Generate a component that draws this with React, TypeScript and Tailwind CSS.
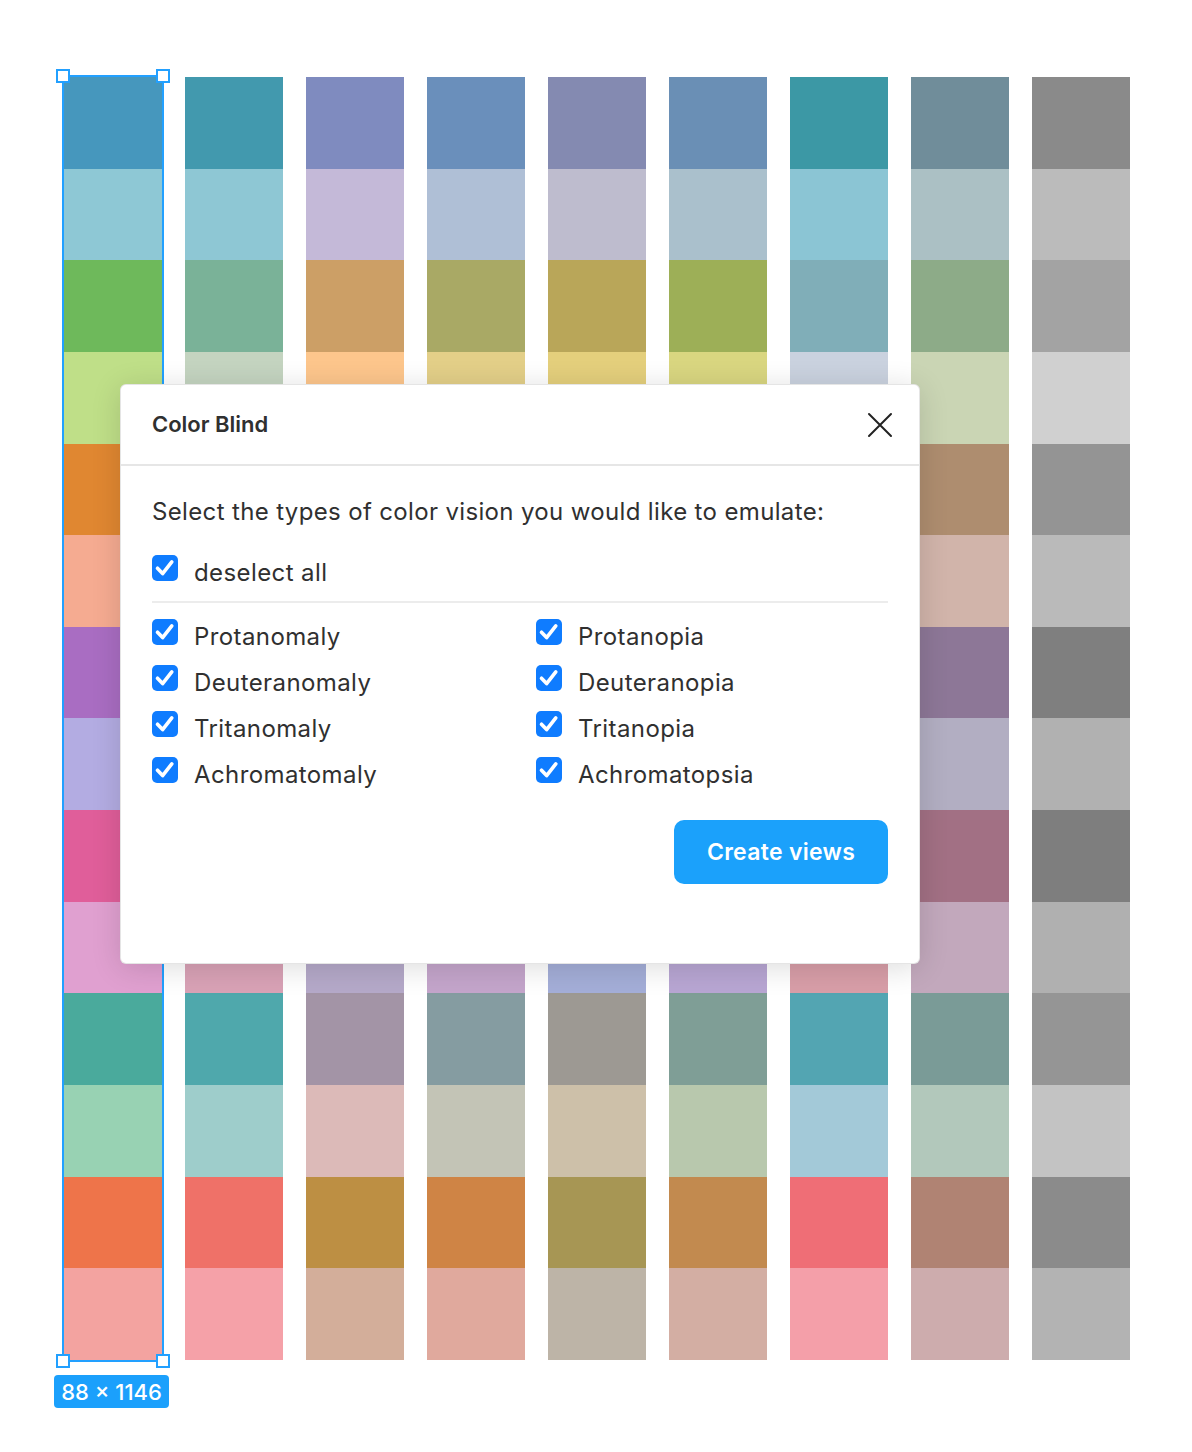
import React from "react";

// Palette columns: the original palette followed by its simulated variants.
const columns: string[][] = [
  ["#4697bd", "#8ec8d5", "#6eb95b", "#bfdf88", "#e08731", "#f5ab91", "#a96dc2", "#b3ace2", "#e05e9a", "#e0a0d0", "#4aaa9c", "#98d2b3", "#ee744a", "#f3a3a0"],
  ["#4299ae", "#8ec7d4", "#7ab298", "#c4d4c0", "#c0933e", "#e6b09a", "#8b86c4", "#b2b0e0", "#d3728f", "#d9a2b6", "#4fa8ac", "#9ecdcb", "#ef7168", "#f5a1a8"],
  ["#7f8bbf", "#c4b9d8", "#cc9f66", "#fdc68c", "#b9893c", "#e0b395", "#7d88c1", "#b3b4dd", "#a98a9f", "#b5a9c9", "#a394a6", "#dcbab8", "#bd8f43", "#d3ae9a"],
  ["#6a8fbb", "#afbfd6", "#a9a965", "#e3cf88", "#c98b3f", "#edb094", "#8784c2", "#b5b1de", "#c07a95", "#c4a5cb", "#859ca1", "#c3c4b6", "#cf8445", "#e0a99d"],
  ["#848ab1", "#bebcce", "#b9a659", "#e4cf7c", "#b89c4c", "#d8b9a0", "#8d8cb2", "#b9b7cc", "#a98f96", "#a4aed8", "#9d9993", "#cdc0a9", "#a79654", "#bdb4a7"],
  ["#6a8fb5", "#aac0cc", "#9daf57", "#d9d680", "#c3924a", "#e1b49d", "#8a86bc", "#b6b2d6", "#bb7f97", "#b8a6d3", "#7f9e96", "#b8c8ad", "#c28a4f", "#d3aea3"],
  ["#3c98a5", "#8bc5d4", "#80aeb8", "#cad2df", "#d18a72", "#e7aeb0", "#6b90c2", "#a9bbe0", "#d27089", "#d89ea8", "#53a5b2", "#a3c9d8", "#ef6e76", "#f49fa9"],
  ["#708d9a", "#abc0c4", "#8dab88", "#cad5b4", "#ae8d6f", "#d1b4aa", "#8d7797", "#b2aec2", "#a27084", "#c2a8bc", "#7a9b97", "#b2c8bb", "#b08373", "#cdacad"],
  ["#8a8a8a", "#bbbbbb", "#a3a3a3", "#d0d0d0", "#949494", "#bababa", "#7f7f7f", "#b1b1b1", "#7e7e7e", "#b0b0b0", "#959595", "#c3c3c3", "#8b8b8b", "#b3b3b3"],
];

const leftTypes = ["Protanomaly", "Deuteranomaly", "Tritanomaly", "Achromatomaly"];
const rightTypes = ["Protanopia", "Deuteranopia", "Tritanopia", "Achromatopsia"];

function Checkbox() {
  return (
    <span className="flex h-[26px] w-[26px] shrink-0 items-center justify-center rounded-[5px] bg-[#0f7cff]">
      <svg width="26" height="26" viewBox="0 0 26 26" fill="none">
        <path d="M5.5 13.2 L10.6 18.6 L19.8 6.8" stroke="#ffffff" strokeWidth="3.6" strokeLinecap="round" strokeLinejoin="round" />
      </svg>
    </span>
  );
}

function CheckRow({ label }: { label: string }) {
  return (
    <label className="flex h-[46px] items-start gap-4">
      <Checkbox />
      <span className="mt-[5px] text-[24px] leading-[26px] tracking-[0.4px] text-[#303030]">{label}</span>
    </label>
  );
}

function Handle({ pos }: { pos: string }) {
  return <span className={`absolute h-[14px] w-[14px] border-2 border-[#22a0ff] bg-white ${pos}`} />;
}

export default function App() {
  return (
    <div
      className="relative h-[1452px] w-[1192px] overflow-hidden bg-white"
      style={{ fontFamily: "Inter, 'Noto Sans', 'Liberation Sans', sans-serif" }}
    >
      {/* swatch board */}
      <div className="flex gap-[23px] pl-[64px] pt-[77px]">
        {columns.map((col, ci) => (
          <div key={ci} className="relative flex h-[1283px] w-[98px] flex-col">
            {col.map((c, ri) => (
              <div key={ri} className="flex-1" style={{ backgroundColor: c }} />
            ))}
            {ci === 0 && (
              <>
                <div className="pointer-events-none absolute -inset-[2px] border-2 border-[#22a0ff]" />
                <Handle pos="-left-[8px] -top-[8px]" />
                <Handle pos="-right-[8px] -top-[8px]" />
                <Handle pos="-left-[8px] -bottom-[8px]" />
                <Handle pos="-right-[8px] -bottom-[8px]" />
                <div className="absolute -left-[10px] top-[calc(100%+15px)] flex h-[33px] w-[115px] items-center justify-center rounded-[4px] bg-[#1ba0fc] text-[22px] font-medium leading-none text-white">
                  88 × 1146
                </div>
              </>
            )}
          </div>
        ))}
      </div>

      {/* Color Blind dialog */}
      <div className="absolute left-[120px] top-[384px] flex h-[580px] w-[800px] flex-col rounded-[6px] border border-black/10 bg-white shadow-[0_4px_30px_rgba(0,0,0,0.14)]">
        <div className="flex h-[81px] shrink-0 items-center justify-between border-b-2 border-[#e6e6e6] pl-[31px] pr-[26px]">
          <h2 className="text-[22px] font-semibold text-[#303030]">Color Blind</h2>
          <svg width="26" height="26" viewBox="0 0 26 26" fill="none">
            <path d="M2 2 L24 24 M24 2 L2 24" stroke="#222222" strokeWidth="2" strokeLinecap="round" />
          </svg>
        </div>

        <div className="flex flex-1 flex-col px-[31px] pt-[31px]">
          <p className="text-[24px] leading-[30px] tracking-[0.35px] text-[#303030]">
            Select the types of color vision you would like to emulate:
          </p>

          <div className="mt-[28px]">
            <CheckRow label="deselect all" />
          </div>

          <div className="h-[2px] bg-[#ececec]" />

          <div className="mt-[16px] grid grid-cols-[384px_1fr]">
            <div className="flex flex-col">
              {leftTypes.map((t) => (
                <CheckRow key={t} label={t} />
              ))}
            </div>
            <div className="flex flex-col">
              {rightTypes.map((t) => (
                <CheckRow key={t} label={t} />
              ))}
            </div>
          </div>

          <div className="mt-[17px] flex justify-end">
            <button className="flex h-[64px] w-[214px] items-center justify-center rounded-[10px] bg-[#1ba1fb] text-[23px] font-semibold tracking-[0.3px] text-white">
              Create views
            </button>
          </div>
        </div>
      </div>
    </div>
  );
}
